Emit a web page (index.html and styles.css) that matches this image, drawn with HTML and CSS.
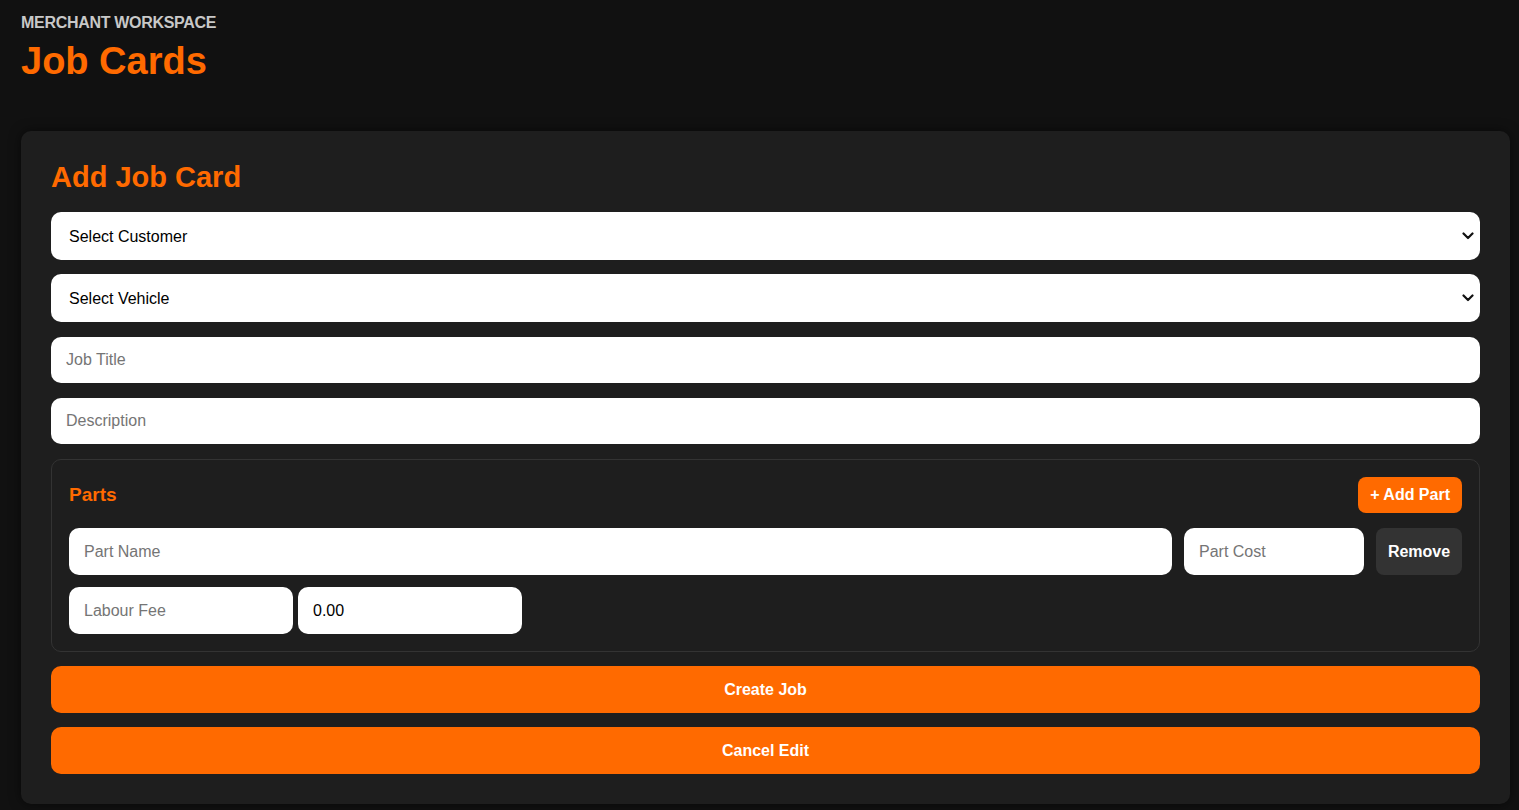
FILE: index.html
```html
<!DOCTYPE html>
<html lang="en">
<head>
<meta charset="utf-8">
<title>Job Cards</title>
<link rel="stylesheet" href="styles.css">
</head>
<body>
<header class="page-header">
  <p class="eyebrow">MERCHANT WORKSPACE</p>
  <h1 class="page-title">Job Cards</h1>
</header>
<main class="card">
  <h2 class="card-title">Add Job Card</h2>
  <form class="form">
    <div class="select-wrap">
      <select class="field select">
        <option>Select Customer</option>
      </select>
      <svg class="chevron" width="12" height="8" viewBox="0 0 12 8"><path d="M1.5 1.5 L6 6 L10.5 1.5" fill="none" stroke="#111" stroke-width="2.2" stroke-linecap="round" stroke-linejoin="round"/></svg>
    </div>
    <div class="select-wrap">
      <select class="field select">
        <option>Select Vehicle</option>
      </select>
      <svg class="chevron" width="12" height="8" viewBox="0 0 12 8"><path d="M1.5 1.5 L6 6 L10.5 1.5" fill="none" stroke="#111" stroke-width="2.2" stroke-linecap="round" stroke-linejoin="round"/></svg>
    </div>
    <input class="field input" type="text" placeholder="Job Title">
    <input class="field input" type="text" placeholder="Description">
    <section class="parts">
      <div class="parts-head">
        <h3 class="parts-title">Parts</h3>
        <button type="button" class="btn-add">+ Add Part</button>
      </div>
      <div class="part-row">
        <input class="field input" type="text" placeholder="Part Name">
        <input class="field input" type="text" placeholder="Part Cost">
        <button type="button" class="btn-remove">Remove</button>
      </div>
      <div class="labour-row">
        <input class="field input small" type="text" placeholder="Labour Fee">
        <input class="field input small" type="text" value="0.00">
      </div>
    </section>
    <button type="button" class="btn-primary">Create Job</button>
    <button type="button" class="btn-primary">Cancel Edit</button>
  </form>
</main>
</body>
</html>
```
FILE: styles.css
```css
* { box-sizing: border-box; }
html, body { height: 100%; }
body {
  margin: 0;
  background: #111111;
  font-family: "Liberation Sans", Arial, sans-serif;
  color: #fff;
  padding: 13px 9px 0 21px;
}
.page-header { margin-bottom: 46px; }
.eyebrow {
  margin: 0;
  font-size: 16px;
  font-weight: 700;
  color: #c8c8c8;
  letter-spacing: -0.3px;
  line-height: 20px;
}
.page-title {
  margin: 4px 0 0;
  font-size: 38px;
  font-weight: 700;
  color: #ff6a00;
  line-height: 48px;
}
.card {
  background: #1e1e1e;
  border-radius: 10px;
  padding: 30px 30px 30px;
  box-shadow: 0 0 12px rgba(0,0,0,0.55);
}
.card-title {
  margin: 0 0 19px;
  font-size: 29px;
  font-weight: 700;
  color: #ff6a00;
  line-height: 32px;
}
.form { display: flex; flex-direction: column; gap: 15px; }
.field {
  width: 100%;
  border: none;
  border-radius: 10px;
  background: #fff;
  font-family: "Liberation Sans", Arial, sans-serif;
  font-size: 16px;
  color: #000;
  outline: none;
}
.select-wrap { position: relative; }
.select-wrap + .select-wrap { margin-top: -1px; }
.select {
  -webkit-appearance: none;
  appearance: none;
  height: 48px;
  padding: 0 40px 0 18px;
  display: block;
}
.chevron {
  position: absolute;
  right: 6px;
  top: 20px;
  pointer-events: none;
}
.input {
  height: 46px;
  padding: 0 15px;
}
.input::placeholder { color: #757575; }
.parts {
  border: 1px solid #333;
  border-radius: 10px;
  padding: 17px 17px 17px;
  display: flex;
  flex-direction: column;
}
.parts-head {
  display: flex;
  justify-content: space-between;
  align-items: center;
  margin-bottom: 15px;
}
.parts-title {
  margin: 0;
  font-size: 19px;
  font-weight: 700;
  color: #ff6a00;
}
.btn-add {
  height: 36px;
  padding: 0 12px;
  border: none;
  border-radius: 8px;
  background: #ff6a00;
  color: #fff;
  font-family: "Liberation Sans", Arial, sans-serif;
  font-size: 16px;
  font-weight: 700;
}
.part-row {
  display: grid;
  grid-template-columns: 1fr 180px 86px;
  gap: 12px;
  margin-bottom: 12px;
}
.part-row .input { height: 47px; }
.btn-remove {
  height: 47px;
  border: none;
  border-radius: 8px;
  background: #333;
  color: #fff;
  font-family: "Liberation Sans", Arial, sans-serif;
  font-size: 16px;
  font-weight: 700;
}
.labour-row { display: flex; gap: 5px; }
.input.small { width: 224px; height: 47px; }
.btn-primary {
  height: 47px;
  border: none;
  border-radius: 10px;
  background: #ff6a00;
  color: #fff;
  font-family: "Liberation Sans", Arial, sans-serif;
  font-size: 16px;
  font-weight: 700;
  margin-top: -1px;
}
```
